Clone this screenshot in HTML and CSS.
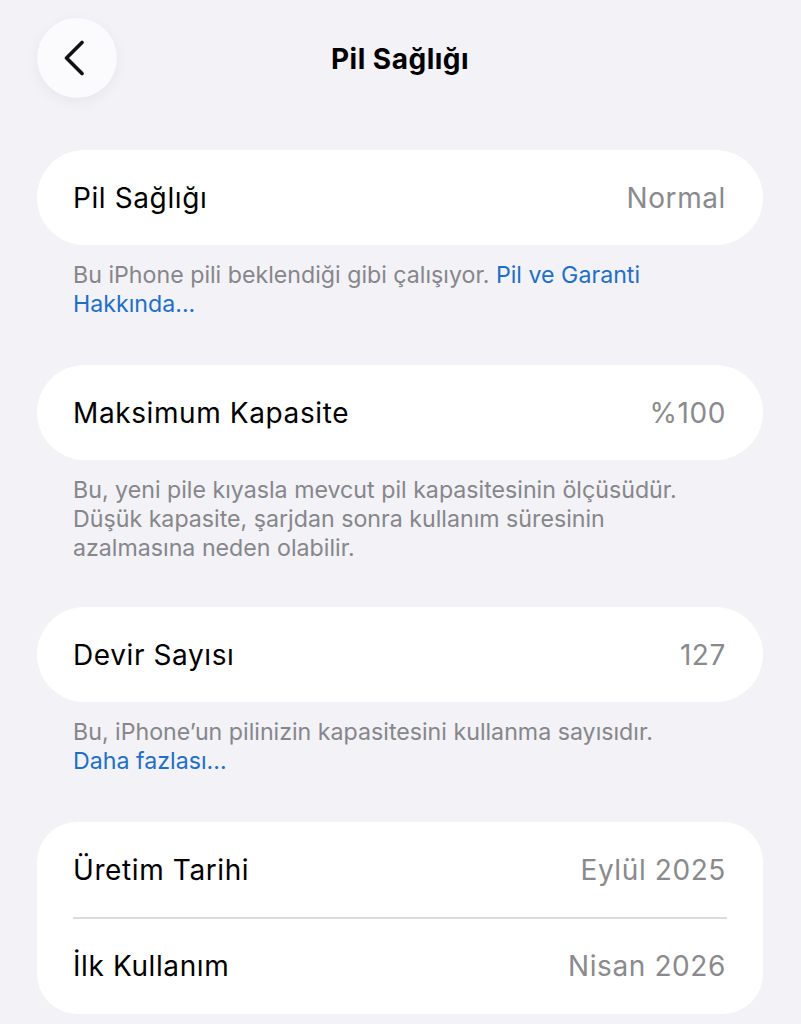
FILE: index.html
```html
<!DOCTYPE html>
<html lang="tr">
<head>
<meta charset="utf-8">
<title>Pil Sağlığı</title>
<link rel="stylesheet" href="styles.css">
</head>
<body>
<div class="page">
  <header class="nav">
    <button class="back" aria-label="Geri">
      <svg width="26" height="36" viewBox="0 0 26 36"><path d="M20 2.5 L4.5 18 L20 33.5" fill="none" stroke="#111" stroke-width="3.6" stroke-linecap="round" stroke-linejoin="round"/></svg>
    </button>
    <h1 class="title">Pil Sağlığı</h1>
  </header>

  <section class="group g1">
    <div class="card">
      <div class="row"><span class="label">Pil Sağlığı</span><span class="value">Normal</span></div>
    </div>
    <p class="footer">Bu iPhone pili beklendiği gibi çalışıyor. <a class="link">Pil ve Garanti Hakkında...</a></p>
  </section>

  <section class="group g2">
    <div class="card">
      <div class="row"><span class="label">Maksimum Kapasite</span><span class="value">%100</span></div>
    </div>
    <p class="footer">Bu, yeni pile kıyasla mevcut pil kapasitesinin ölçüsüdür. Düşük kapasite, şarjdan sonra kullanım süresinin azalmasına neden olabilir.</p>
  </section>

  <section class="group g3">
    <div class="card">
      <div class="row"><span class="label">Devir Sayısı</span><span class="value">127</span></div>
    </div>
    <p class="footer">Bu, iPhone’un pilinizin kapasitesini kullanma sayısıdır.<br><a class="link">Daha fazlası...</a></p>
  </section>

  <section class="group g4">
    <div class="card card-multi">
      <div class="row"><span class="label">Üretim Tarihi</span><span class="value">Eylül 2025</span></div>
      <div class="divider"></div>
      <div class="row"><span class="label">İlk Kullanım</span><span class="value">Nisan 2026</span></div>
    </div>
  </section>
</div>
</body>
</html>
```

FILE: styles.css
```css
html, body {
  margin: 0;
  padding: 0;
  background: #f2f2f7;
}
body {
  font-family: "Inter", "Roboto", "Liberation Sans", sans-serif;
  color: #000;
  -webkit-font-smoothing: antialiased;
}
.page {
  padding: 18px 38px 0 37px;
}
.nav {
  display: flex;
  align-items: center;
  height: 80px;
  position: relative;
}
.back {
  width: 80px;
  height: 80px;
  border-radius: 50%;
  border: none;
  background: #fbfbfd;
  box-shadow: 0 4px 14px rgba(0,0,0,0.05);
  display: flex;
  align-items: center;
  justify-content: center;
  padding: 0 4px 0 0;
}
.title {
  position: absolute;
  left: 0;
  right: 0;
  top: 0;
  margin: 0;
  text-align: center;
  line-height: 82px;
  font-size: 28px;
  letter-spacing: 0.5px;
  font-weight: 700;
  pointer-events: none;
}
.g1 { margin-top: 52px; }
.g2 { margin-top: 46px; }
.g3 { margin-top: 44px; }
.g4 { margin-top: 46px; }
.card {
  background: #fff;
  border-radius: 48px;
  overflow: hidden;
}
.card-multi {
  border-radius: 40px;
}
.row {
  height: 95px;
  display: flex;
  align-items: center;
  justify-content: space-between;
  padding: 0 37px 0 36px;
  font-size: 28px;
  letter-spacing: 0.6px;
}
.label {
  color: #000;
}
.value {
  color: #8a8a8e;
}
.divider {
  height: 1.5px;
  background: #dcdce0;
  margin: 0 36px;
}
.footer {
  margin: 0;
  padding: 16px 66px 0 36px;
  font-size: 23.2px;
  line-height: 29px;
  color: #86868b;
}
.link {
  color: #1f6fc5;
}
```
